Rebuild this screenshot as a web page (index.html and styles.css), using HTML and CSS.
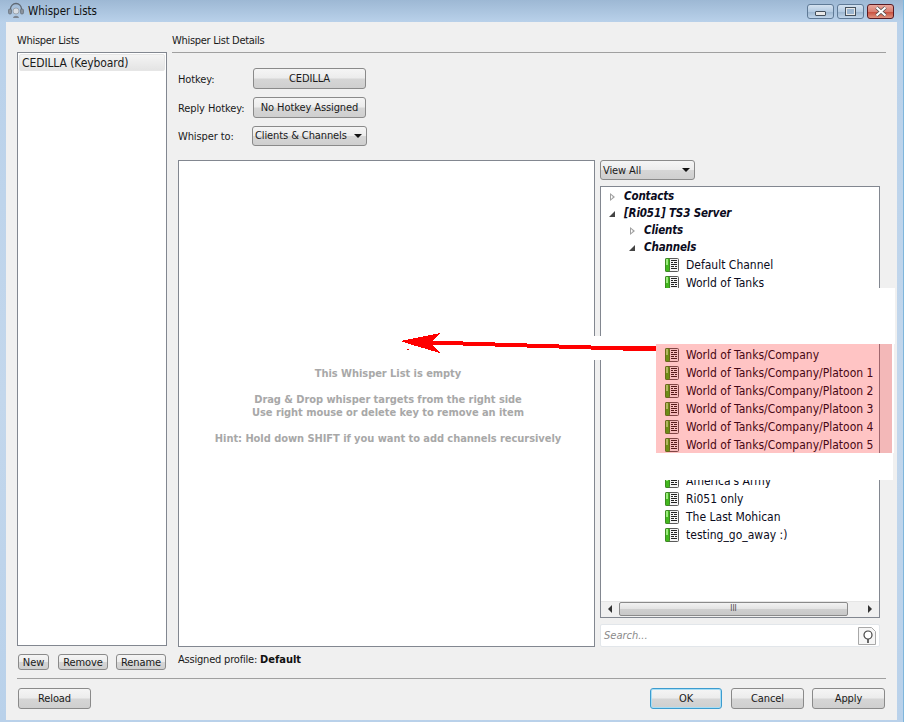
FILE: index.html
```html
<!DOCTYPE html>
<html lang="en">
<head>
    <meta charset="UTF-8">
    <meta name="viewport" content="width=device-width, initial-scale=1.0">
    <title>Whisper Lists</title>
    <link rel="stylesheet" href="styles.css">
</head>
<body>
    <svg class="defs" width="0" height="0">
        <symbol id="channel" viewBox="0 0 14 14">
            <rect x="0.5" y="0.5" width="13" height="13" rx="1" fill="#f4f4f4" stroke="#5a5a5a"/>
            <rect x="0.5" y="0.5" width="4" height="13" rx="1" fill="#43b81f" stroke="#3c8a20"/>
            <rect x="1" y="1" width="2" height="6" fill="#9bec7c"/>
            <path d="M6 2.500h6M6 4.500h2M9 4.500h3M6 6.500h6M6 8.500h3M10 8.500h2M6 10.500h6" stroke="#222" fill="none"/>
        </symbol>
    </svg>

    <div class="window">
        <div class="titlebar">
            <svg class="appIcon" width="18" height="18" viewBox="0 0 18 18">
                <path d="M3.500 9V7a5.500 5.500 0 0 1 11 0v2" fill="none" stroke="#5f6873" stroke-width="1.300"/>
                <rect x="1.500" y="7" width="3" height="5" rx="1.200" fill="#8a929c" stroke="#59616b" stroke-width=".6"/>
                <rect x="13.500" y="7" width="3" height="5" rx="1.200" fill="#8a929c" stroke="#59616b" stroke-width=".6"/>
                <circle cx="9" cy="9" r="3" fill="#d8dde3" stroke="#8a929c" stroke-width=".7"/>
                <path d="M6 16c.5-3 5.500-3 6 0z" fill="#7d8590"/>
            </svg>
            <span class="titleText">Whisper Lists</span>
            <div class="winButtons">
                <div class="winBtn"><span class="minGlyph"></span></div>
                <div class="winBtn"><span class="maxGlyph"></span></div>
                <div class="winBtn closeBtn"><svg width="14" height="11" viewBox="0 0 14 11"><path d="M2.500 1.500L11.500 9.500M11.500 1.500L2.500 9.500" stroke="#4a4a4a" stroke-width="3.600"/><path d="M2.500 1.500L11.500 9.500M11.500 1.500L2.500 9.500" stroke="#fff" stroke-width="2.200"/></svg></div>
            </div>
        </div>

        <div class="panel">
            <div class="mainArea">
                <div class="leftCol">
                    <div class="groupLabel">Whisper Lists</div>
                    <div class="whisperList">
                        <div class="whisperItem">CEDILLA (Keyboard)</div>
                    </div>
                    <div class="listButtons">
                        <button class="btn btnNew">New</button>
                        <button class="btn btnRemove">Remove</button>
                        <button class="btn btnRename">Rename</button>
                    </div>
                </div>

                <div class="rightCol">
                    <div class="groupLabel detailsLabel">Whisper List Details</div>
                    <div class="details">
                        <div class="formGrid">
                            <label>Hotkey:</label>
                            <button class="btn formBtn">CEDILLA</button>
                            <label>Reply Hotkey:</label>
                            <button class="btn formBtn">No Hotkey Assigned</button>
                            <label>Whisper to:</label>
                            <div class="btn combo whisperCombo">Clients &amp; Channels<span class="arrowDown"></span></div>
                        </div>

                        <div class="splitArea">
                            <div class="targetPane">
                                <p><b>This Whisper List is empty</b></p>
                                <p><b>Drag &amp; Drop whisper targets from the right side<br>Use right mouse or delete key to remove an item</b></p>
                                <p><b>Hint: Hold down SHIFT if you want to add channels recursively</b></p>
                            </div>
                            <div class="treeCol">
                                <div class="btn combo viewCombo">View All<span class="arrowDown"></span></div>
                                <div class="tree">
                                    <div class="treeRows">
                                        <div class="group"><span class="open closedArrow"></span>Contacts</div>
                                        <div class="group"><span class="open openArrow"></span>[Ri051] TS3 Server</div>
                                        <div class="group sub"><span class="open closedArrow"></span>Clients</div>
                                        <div class="group sub"><span class="open openArrow"></span>Channels</div>
                                        <div class="channel"><svg><use href="#channel"/></svg>Default Channel</div>
                                        <div class="channel"><svg><use href="#channel"/></svg>World of Tanks</div>
                                        <div class="gap3"></div>
                                        <div class="channel"><svg><use href="#channel"/></svg>World of Tanks/Company</div>
                                        <div class="channel"><svg><use href="#channel"/></svg>World of Tanks/Company/Platoon 1</div>
                                        <div class="channel"><svg><use href="#channel"/></svg>World of Tanks/Company/Platoon 2</div>
                                        <div class="channel"><svg><use href="#channel"/></svg>World of Tanks/Company/Platoon 3</div>
                                        <div class="channel"><svg><use href="#channel"/></svg>World of Tanks/Company/Platoon 4</div>
                                        <div class="channel"><svg><use href="#channel"/></svg>World of Tanks/Company/Platoon 5</div>
                                        <div class="gap1"></div>
                                        <div class="channel"><svg><use href="#channel"/></svg>America's Army</div>
                                        <div class="channel"><svg><use href="#channel"/></svg>Ri051 only</div>
                                        <div class="channel"><svg><use href="#channel"/></svg>The Last Mohican</div>
                                        <div class="channel"><svg><use href="#channel"/></svg>testing_go_away :)</div>
                                    </div>
                                    <div class="hScroll">
                                        <span class="scrollArrow leftArrow"></span>
                                        <div class="thumb">III</div>
                                        <span class="scrollArrow rightArrow"></span>
                                    </div>
                                </div>
                                <div class="search">
                                    <span>Search...</span>
                                    <svg width="18" height="18" viewBox="0 0 18 18">
                                        <path d="M.5.5h13l4 4v13H.5z" fill="#f6f6f6" stroke="#a8a8a8"/>
                                        <circle cx="10" cy="8" r="4" fill="#fff" stroke="#444" stroke-width="1.200"/>
                                        <path d="M10 12v4" stroke="#444" stroke-width="1.600"/>
                                    </svg>
                                </div>
                            </div>
                        </div>
                        <div class="profile">Assigned profile: <b>Default</b></div>
                    </div>
                </div>
            </div>

            <div class="footer">
                <button class="btn footBtn">Reload</button>
                <div class="footRight">
                    <button class="btn footBtn okBtn">OK</button>
                    <button class="btn footBtn">Cancel</button>
                    <button class="btn footBtn">Apply</button>
                </div>
            </div>
        </div>

        <!-- pasted over the screenshot -->
        <div class="patch patchTop"></div>
        <div class="patch patchBottom"></div>
        <div class="patch patchLeft"></div>
        <div class="patch patchRight"></div>
        <div class="highlight"></div>
        <svg class="arrow" width="904" height="722" viewBox="0 0 904 722" shape-rendering="crispEdges">
            <path fill="#f00" d="M401 341L440 333L432 341H463V342H495V343H527V344H559V345H591V346H623V346H656V351H623V350H591V349H559V348H527V347H495V346H463V345H432L440 353L406 343Z"/>
            <rect x="407" y="349" width="2" height="1" fill="#f00"/>
        </svg>
    </div>
</body>
</html>
```

FILE: styles.css
```css
* {
    margin: 0;
    padding: 0;
    box-sizing: border-box;
}
body {
    font-family: "DejaVu Sans", Arial, sans-serif;
    font-stretch: condensed;
    font-size: 11px;
    color: #1a1a1a;
    background-color: #b6cfe8;
}
.defs {
    position: absolute;
}
.window {
    position: relative;
    width: 904px;
    height: 722px;
    display: flex;
    flex-direction: column;
    overflow: hidden;
    background: linear-gradient(#b9d1ea, #c3d7ec 55%, #b9d1ea);
    border-right: 1px solid #7fb6dc;
}

/* Title bar */
.titlebar {
    height: 22px;
    display: flex;
    align-items: center;
    padding-left: 7px;
    background: linear-gradient(#9db8d4, #b9d1ea);
}
.appIcon {
    margin-right: 3px;
}
.titleText {
    font-size: 11.5px;
    color: #111;
}
.winButtons {
    margin-left: auto;
    margin-right: 9px;
    display: flex;
    gap: 3px;
    margin-top: 4px;
    align-self: flex-start;
}
.winBtn {
    width: 27px;
    height: 15px;
    border: 1px solid #5f7a96;
    border-radius: 3px;
    background: linear-gradient(#d4e2f0, #b4cbe2 50%, #9cb6d0 55%, #c0d5ea);
    display: flex;
    align-items: center;
    justify-content: center;
}
.closeBtn {
    border-color: #5a1a22;
    background: linear-gradient(#e9a79c, #d97f72 50%, #c8503f 55%, #e0937f);
}
.minGlyph {
    width: 11px;
    height: 5px;
    margin-top: 3px;
    background: #e8e8e8;
    border: 1px solid #44505c;
    border-radius: 1px;
}
.maxGlyph {
    width: 11px;
    height: 9px;
    border: 2px solid #e8e8e8;
    outline: 1px solid #44505c;
    outline-offset: -1px;
    background: #9cb6d0;
}

/* Panel */
.panel {
    flex: 1;
    margin: 0 6px 2px 6px;
    padding: 11px 11px 11px 11px;
    background-color: #f0f0f0;
    display: flex;
    flex-direction: column;
}
.mainArea {
    flex: 1;
    display: flex;
    gap: 5px;
    min-height: 0;
}
.leftCol {
    width: 150px;
    display: flex;
    flex-direction: column;
}
.rightCol {
    flex: 1;
    display: flex;
    flex-direction: column;
}
.groupLabel {
    height: 14px;
    line-height: 16px;
    margin-bottom: 5px;
    letter-spacing: -0.3px;
}
.detailsLabel {
    height: 20px;
    margin-bottom: 0;
    border-bottom: 1px solid #a0a0a0;
}
.whisperList {
    flex: 1;
    background-color: white;
    border: 1px solid #828790;
    padding: 1px;
}
.whisperItem {
    height: 17px;
    line-height: 16px;
    padding-left: 2px;
    font-size: 12px;
    letter-spacing: -0.1px;
    border-radius: 2px;
    background: linear-gradient(#f4f4f4, #e4e4e4);
    border: 1px solid #e6e6e6;
}
.listButtons {
    display: flex;
    margin-top: 8px;
    height: 16px;
    padding-left: 1px;
}
.btn {
    font-family: inherit;
    font-stretch: inherit;
    font-size: 11px;
    letter-spacing: -0.1px;
    color: #1a1a1a;
    border: 1px solid #8a8a8a;
    border-radius: 3px;
    background: linear-gradient(#f5f5f5, #ececec 48%, #d6d6d6 52%, #cfcfcf);
    cursor: pointer;
}
.btnNew { width: 31px; }
.btnRemove { width: 50px; margin-left: 9px; }
.btnRename { width: 50px; margin-left: 8px; }

/* Details form */
.details {
    flex: 1;
    display: flex;
    flex-direction: column;
    padding-left: 6px;
    padding-top: 15px;
    min-height: 0;
}
.formGrid {
    display: grid;
    grid-template-columns: 75px 113px;
    grid-template-rows: 21px 21px 20px;
    row-gap: 8px;
    align-items: center;
    letter-spacing: -0.1px;
}
.formGrid label {
    padding-top: 1px;
}
.formBtn {
    height: 21px;
}
.combo {
    display: flex;
    align-items: center;
    justify-content: space-between;
    padding: 0 4px 0 2px;
    white-space: nowrap;
}
.whisperCombo {
    width: 115px;
    height: 20px;
    margin-left: -1px;
    margin-top: -1px;
}
.arrowDown {
    border-left: 4px solid transparent;
    border-right: 4px solid transparent;
    border-top: 4px solid #111;
}

/* Split area */
.splitArea {
    flex: 1;
    display: flex;
    gap: 5px;
    margin-top: 14px;
    min-height: 0;
}
.targetPane {
    width: 417px;
    background-color: white;
    border: 1px solid #828790;
    display: flex;
    flex-direction: column;
    align-items: center;
    justify-content: center;
    text-align: center;
    gap: 13px;
    color: #a8a8a8;
    line-height: 13px;
    letter-spacing: -0.05px;
    padding: 4px 0 0 3px;
}
.treeCol {
    width: 280px;
    display: flex;
    flex-direction: column;
}
.viewCombo {
    width: 95px;
    height: 20px;
    margin-bottom: 6px;
}
.tree {
    flex: 1;
    background-color: white;
    border: 1px solid #828790;
    display: flex;
    flex-direction: column;
    min-height: 0;
}
.treeRows {
    flex: 1;
    padding-top: 1px;
    color: #0b0b20;
}
.group {
    height: 17px;
    line-height: 17px;
    font-size: 11.5px;
    letter-spacing: -0.15px;
    font-weight: bold;
    font-style: italic;
    padding-left: 8px;
    display: flex;
    align-items: center;
}
.sub {
    padding-left: 28px;
}
.open {
    width: 15px;
    height: 8px;
    position: relative;
    flex-shrink: 0;
}
.closedArrow::before {
    content: "";
    position: absolute;
    left: 1px;
    top: 0;
    border-left: 5px solid #a0a0a0;
    border-top: 4px solid transparent;
    border-bottom: 4px solid transparent;
}
.closedArrow::after {
    content: "";
    position: absolute;
    left: 2px;
    top: 2px;
    border-left: 2px solid white;
    border-top: 2px solid transparent;
    border-bottom: 2px solid transparent;
}
.openArrow::before {
    content: "";
    position: absolute;
    left: 0;
    top: 1px;
    border-right: 6px solid #444;
    border-top: 6px solid transparent;
}
.channel {
    height: 18px;
    font-size: 12px;
    padding-left: 64px;
    display: flex;
    align-items: center;
    white-space: nowrap;
}
.channel svg {
    width: 14px;
    height: 14px;
    margin-right: 7px;
    flex-shrink: 0;
}
.gap3 { height: 54px; }
.gap1 { height: 18px; }
.hScroll {
    height: 16px;
    padding-bottom: 1px;
    display: flex;
    align-items: center;
    background-color: #f0f0f0;
    border-top: 1px solid #e6e6e6;
}
.scrollArrow {
    width: 18px;
    display: flex;
    justify-content: center;
}
.leftArrow::before {
    content: "";
    border-right: 4px solid #333;
    border-top: 4px solid transparent;
    border-bottom: 4px solid transparent;
}
.rightArrow {
    margin-left: auto;
}
.rightArrow::before {
    content: "";
    border-left: 4px solid #333;
    border-top: 4px solid transparent;
    border-bottom: 4px solid transparent;
}
.thumb {
    width: 229px;
    height: 14px;
    border: 1px solid #8a8a8a;
    border-radius: 2px;
    background: linear-gradient(#f2f2f2, #e4e4e4 48%, #cfcfcf 52%, #c8c8c8);
    font-size: 8px;
    line-height: 12px;
    text-align: center;
    color: #444;
}
.search {
    height: 23px;
    margin-top: 6px;
    background-color: white;
    border: 1px solid #e2e6ea;
    border-radius: 2px;
    display: flex;
    align-items: center;
    justify-content: space-between;
    padding: 0 3px 0 3px;
    font-style: italic;
    color: #8a8a8a;
}
.profile {
    height: 23px;
    padding-top: 6px;
    line-height: 14px;
    letter-spacing: -0.2px;
}
.profile b {
    color: #111;
    letter-spacing: 0;
}

/* Footer */
.footer {
    margin-top: 8px;
    padding-top: 9px;
    border-top: 1px solid #a0a0a0;
    display: flex;
    justify-content: space-between;
    padding-left: 1px;
}
.footBtn {
    width: 73px;
    height: 21px;
}
.footRight {
    display: flex;
    gap: 8px;
    padding-right: 1px;
}
.okBtn {
    width: 72px;
    margin-right: 1px;
    border-color: #3c9ccf;
    box-shadow: inset 0 0 0 1px #a8def5;
}

/* Pasted white boxes and the red marking */
.patch {
    position: absolute;
    background-color: white;
}
.patchTop { left: 656px; top: 288px; width: 239px; height: 56px; }
.patchBottom { left: 656px; top: 453px; width: 237px; height: 27px; }
.patchLeft { left: 593px; top: 336px; width: 63px; height: 24px; }
.patchRight { left: 892px; top: 344px; width: 2px; height: 109px; }
.highlight {
    position: absolute;
    left: 656px;
    top: 344px;
    width: 236px;
    height: 109px;
    background-color: rgba(255, 0, 0, 0.23);
}
.arrow {
    position: absolute;
    left: 0;
    top: 0;
}
```
